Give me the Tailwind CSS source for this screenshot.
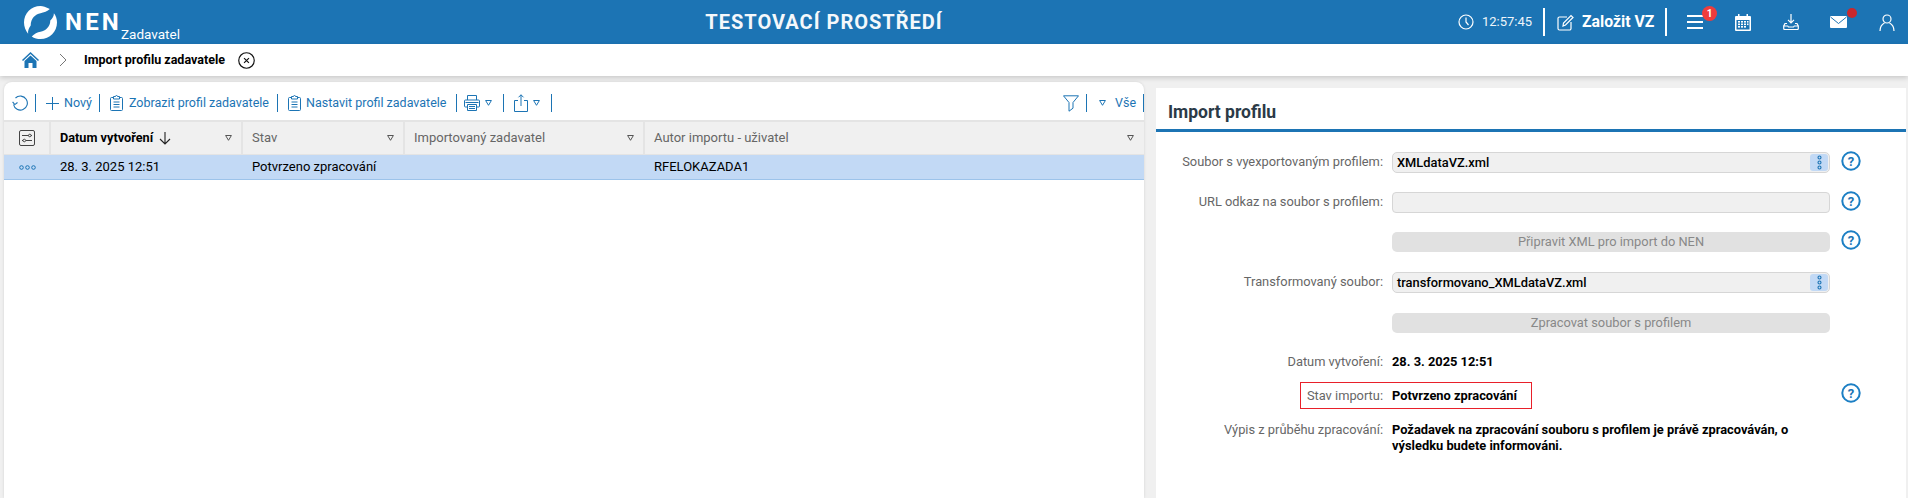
<!DOCTYPE html>
<html lang="cs">
<head>
<meta charset="utf-8">
<title>NEN</title>
<script src="https://cdn.jsdelivr.net/npm/@tailwindcss/browser@4"></script>
</head>
<body class="[font-family:Roboto,sans-serif] text-[13px] bg-[#f0f0f0] h-[498px] w-[1908px] overflow-hidden flex flex-col">
<header class="h-[44px] shrink-0 bg-[#1c74b4] text-white flex items-center relative">
  <div class="flex items-end pl-[24px] w-[400px] h-full">
    <svg class="w-[33px] h-[33px] self-center" viewBox="0 0 32 32" fill="#fff"><path d="M25 3C21 .8 18.500 0 16 0 7 0 0 7 0 16c0 4 1.500 8 4 11C3.500 24 5 21 6.500 19 6.500 12 11 8 16 7 19 6.500 23 5 25 3z"/><path d="M7.500 29.500C10 31.200 13 32 16 32 25 32 32 25 32 16 32 12.500 31 9.500 29 7 29 10 27.500 12 25.500 14 25.500 20 21 24 16 25 13 25.600 10 27 7.500 29.500z"/></svg>
    <div class="ml-[8px] w-[56px] self-center text-[24px] font-bold tracking-[3.2px] leading-none mb-[1px]">NEN</div>
    <div class="text-[13.5px] leading-[16px] mb-[2px]">Zadavatel</div>
  </div>
  <div class="absolute left-[700px] w-[248px] text-center text-[20px] font-bold tracking-[1px] text-[#f4f8fb]">TESTOVACÍ PROSTŘEDÍ</div>
  <div class="ml-auto flex items-center h-full pr-[13px]">
    <svg class="w-[16px] h-[16px]" viewBox="0 0 16 16" fill="none" stroke="#fff" stroke-width="1.200"><circle cx="8" cy="8" r="7"/><path d="M8 3.500V8l2.500 3"/></svg>
    <span class="ml-[8px] text-[13px] w-[49px] whitespace-nowrap text-[#eef5fa]">12:57:45</span>
    <div class="ml-[12px] w-[2px] h-[28px] bg-white"></div>
    <svg class="ml-[12px] w-[17px] h-[17px]" viewBox="0 0 17 17" fill="none" stroke="#fff" stroke-width="1.200"><path d="M10 3H2.500A1.500 1.500 0 0 0 1 4.500v10A1.500 1.500 0 0 0 2.500 16h10a1.500 1.500 0 0 0 1.500-1.500V8"/><path d="M6 12l.5-3L14 1.500l2 2L8.500 11z"/></svg>
    <span class="ml-[8px] text-[15.8px] font-bold w-[71px] whitespace-nowrap">Založit VZ</span>
    <div class="ml-[12px] w-[2px] h-[28px] bg-white"></div>
    <div class="relative ml-[20px] w-[16px] h-[14px] flex flex-col justify-between">
      <div class="h-[2px] bg-white"></div><div class="h-[2px] bg-white"></div><div class="h-[2px] bg-white"></div>
      <div class="absolute left-[15px] top-[-9px] w-[15px] h-[15px] rounded-full bg-[#ee3c3c] text-[10px] font-bold leading-[15px] text-center">1</div>
    </div>
    <svg class="ml-[32px] w-[16px] h-[17px]" viewBox="0 0 16 17" fill="#fff"><path d="M3 0h1.500v2h7V0H13v2h2a1 1 0 0 1 1 1v13a1 1 0 0 1-1 1H1a1 1 0 0 1-1-1V3a1 1 0 0 1 1-1h2z"/><rect x="1.500" y="6" width="13" height="9.500" fill="#1c74b4"/><g fill="#fff"><rect x="3" y="7" width="2" height="1.600"/><rect x="6" y="7" width="2" height="1.600"/><rect x="9" y="7" width="2" height="1.600"/><rect x="12" y="7" width="1.500" height="1.600"/><rect x="3" y="9.500" width="2" height="1.600"/><rect x="6" y="9.500" width="2" height="1.600"/><rect x="9" y="9.500" width="2" height="1.600"/><rect x="12" y="9.500" width="1.500" height="1.600"/><rect x="3" y="12" width="2" height="1.600"/><rect x="6" y="12" width="2" height="1.600"/><rect x="9" y="12" width="2" height="1.600"/></g></svg>
    <svg class="ml-[32px] w-[16px] h-[16px]" viewBox="0 0 16 16" fill="none" stroke="#fff" stroke-width="1.200"><path d="M8 0v8.500M5 5.800 8 8.800l3-3"/><path d="M4 9.500H2L.7 12v2.500a1 1 0 0 0 1 1h12.600a1 1 0 0 0 1-1V12L14 9.500h-2M.7 12h4l.8 1h5l.8-1h4"/></svg>
    <svg class="ml-[31px] w-[17px] h-[12px]" viewBox="0 0 17 12"><rect width="17" height="12" rx="1" fill="#fff"/><path d="M.5 1 8.500 7.500 16.500 1" fill="none" stroke="#1c74b4" stroke-width="1"/></svg>
    <div class="relative w-0 h-0"><div class="absolute left-[0px] top-[-14px] w-[10px] h-[10px] rounded-full bg-[#c9282d]"></div></div>
    <svg class="ml-[32px] w-[16px] h-[17px]" viewBox="0 0 16 17" fill="none" stroke="#fff" stroke-width="1.200"><circle cx="8" cy="5" r="4"/><path d="M1 17c0-4 2.500-7 4.500-8M15 17c0-4-2.500-7-4.500-8"/></svg>
  </div>
</header>

<nav class="h-[32px] shrink-0 bg-white flex items-center pl-[22px] shadow-[0_2px_5px_rgba(0,0,0,0.16)] relative">
  <svg class="w-[17px] h-[16px]" viewBox="0 0 17 16"><path d="M8.500 0 0 8l1 1 7.500-7L16 9l1-1z" fill="#1c74b4"/><path d="M2.500 9 8.500 3.500 14.500 9v7H10.500v-5h-4v5h-4z" fill="#1c74b4"/></svg>
  <svg class="ml-[20px] w-[8px] h-[14px]" viewBox="0 0 8 14" fill="none" stroke="#777" stroke-width="1"><path d="M1 1l6 6-6 6"/></svg>
  <span class="ml-[17px] font-bold text-[12.5px] w-[141px] whitespace-nowrap text-black">Import profilu zadavatele</span>
  <svg class="ml-[13px] w-[17px] h-[17px]" viewBox="0 0 16 16" fill="none" stroke="#111" stroke-width="1.100"><circle cx="8" cy="8" r="7.300"/><path d="M5.700 5.700l4.600 4.600M10.300 5.700l-4.600 4.600"/></svg>
</nav>

<main class="flex-1 flex pl-[4px] pr-[2px] pt-[6px] min-h-0">
  <section class="w-[1140px] bg-white rounded-t-[8px] shadow-[0_0_3px_rgba(0,0,0,0.12)] flex flex-col">
    <div class="h-[40px] flex items-center text-[12.5px] text-[#1c74b4] pl-[8px] pt-[4px] border-b-2 border-[#e4e4e4]">
      <svg class="w-[16px] h-[16px]" viewBox="0 0 16 16" fill="none" stroke="#1c74b4" stroke-width="1.100"><path d="M3.500 3A7 7 0 1 1 1.500 9.500"/><path d="M.6 6.800 2.800 9.600 5.500 7.500"/></svg>
      <div class="ml-[7px] w-px h-[18px] bg-[#1c74b4]"></div>
      <svg class="ml-[10px] w-[13px] h-[13px]" viewBox="0 0 13 13" stroke="#1c74b4" stroke-width="1"><path d="M6.500 0v13M0 6.500h13"/></svg>
      <span class="ml-[5px] w-[28px]">Nový</span>
      <div class="ml-[7px] w-px h-[18px] bg-[#1c74b4]"></div>
      <svg class="ml-[10px] w-[13px] h-[16px]" viewBox="0 0 13 16" fill="none" stroke="#1c74b4"><path d="M3.500 2.500H1.500a1 1 0 0 0-1 1v11a1 1 0 0 0 1 1h10a1 1 0 0 0 1-1v-11a1 1 0 0 0-1-1h-2M3.500 1.500h2a1 1 0 0 1 2 0h2v2.500h-6zM3.500 7h6M3.500 9.500h6M3.500 12h6"/></svg>
      <span class="ml-[6px] w-[141px] whitespace-nowrap">Zobrazit profil zadavatele</span>
      <div class="ml-[7px] w-px h-[18px] bg-[#1c74b4]"></div>
      <svg class="ml-[10px] w-[13px] h-[16px]" viewBox="0 0 13 16" fill="none" stroke="#1c74b4"><path d="M3.500 2.500H1.500a1 1 0 0 0-1 1v11a1 1 0 0 0 1 1h10a1 1 0 0 0 1-1v-11a1 1 0 0 0-1-1h-2M3.500 1.500h2a1 1 0 0 1 2 0h2v2.500h-6zM3.500 7h6M3.500 9.500h6M3.500 12h6"/></svg>
      <span class="ml-[5px] w-[143px] whitespace-nowrap">Nastavit profil zadavatele</span>
      <div class="ml-[7px] w-px h-[18px] bg-[#1c74b4]"></div>
      <svg class="ml-[7px] w-[16px] h-[16px]" viewBox="0 0 16 16" fill="none" stroke="#1c74b4"><path d="M3.500 5V.5h9V5M3.500 12H1.500a1 1 0 0 1-1-1V6a1 1 0 0 1 1-1h13a1 1 0 0 1 1 1v5a1 1 0 0 1-1 1h-2M3.500 9.500h9v6h-9zM5 11.500h6M5 13.500h6M1.500 7.500h13"/></svg>
      <svg class="ml-[5px] w-[7px] h-[6px]" viewBox="0 0 7 6" fill="none" stroke="#1c74b4"><path d="M.6.500h5.800L3.500 5.300z"/></svg>
      <div class="ml-[11px] w-px h-[18px] bg-[#1c74b4]"></div>
      <svg class="ml-[10px] w-[14px] h-[18px]" viewBox="0 0 14 18" fill="none" stroke="#1c74b4"><path d="M4 6.500H.5v11h13v-11H10M7 12V.8M4.500 3.300 7 .8l2.500 2.500"/></svg>
      <svg class="ml-[5px] w-[7px] h-[6px]" viewBox="0 0 7 6" fill="none" stroke="#1c74b4"><path d="M.6.500h5.800L3.500 5.300z"/></svg>
      <div class="ml-[11px] w-px h-[18px] bg-[#1c74b4]"></div>
      <svg class="ml-auto w-[16px] h-[17px]" viewBox="0 0 16 17" fill="none" stroke="#1c74b4"><path d="M.5.800h15L10 7.500v5.700l-4 3V7.500z"/></svg>
      <div class="ml-[7px] w-px h-[18px] bg-[#1c74b4]"></div>
      <svg class="ml-[12px] w-[7px] h-[6px]" viewBox="0 0 7 6" fill="none" stroke="#1c74b4"><path d="M.6.500h5.800L3.500 5.300z"/></svg>
      <span class="ml-[9px] w-[21px]">Vše</span>
      <div class="ml-[7px] w-px h-[18px] bg-[#1c74b4]"></div>
    </div>
    <div class="grid grid-cols-[47px_192px_162px_240px_1fr] h-[33px] bg-[#f0f0f0] text-[#666] border-b border-[#e4e4e4] items-stretch">
      <div class="border-r-2 border-[#e4e4e4] flex items-center justify-center">
        <svg class="w-[16px] h-[16px]" viewBox="0 0 16 16" fill="none" stroke="#444"><rect x=".5" y=".5" width="15" height="15" rx="1.500"/><path d="M3 5.500h6.500M12 5.500h1M3 10.500h1M7 10.500h6"/><circle cx="10.800" cy="5.500" r="1.300"/><circle cx="5.300" cy="10.500" r="1.300"/></svg>
      </div>
      <div class="border-r-2 border-[#e4e4e4] flex items-center pl-[9px] pr-[9px] text-black font-bold text-[12.7px]">
        <span>Datum vytvoření</span>
        <svg class="ml-[6px] w-[12px] h-[13px]" viewBox="0 0 12 13" fill="none" stroke="#222" stroke-width="1.100"><path d="M6 0v12M1 7l5 5 5-5"/></svg>
        <svg class="ml-auto w-[7px] h-[6px]" viewBox="0 0 7 6" fill="none" stroke="#555"><path d="M.6.500h5.800L3.500 5.300z"/></svg>
      </div>
      <div class="border-r-2 border-[#e4e4e4] flex items-center pl-[9px] pr-[9px]">
        <span>Stav</span>
        <svg class="ml-auto w-[7px] h-[6px]" viewBox="0 0 7 6" fill="none" stroke="#555"><path d="M.6.500h5.800L3.500 5.300z"/></svg>
      </div>
      <div class="border-r-2 border-[#e4e4e4] flex items-center pl-[9px] pr-[9px]">
        <span>Importovaný zadavatel</span>
        <svg class="ml-auto w-[7px] h-[6px]" viewBox="0 0 7 6" fill="none" stroke="#555"><path d="M.6.500h5.800L3.500 5.300z"/></svg>
      </div>
      <div class="flex items-center pl-[9px] pr-[10px]">
        <span>Autor importu - uživatel</span>
        <svg class="ml-auto w-[7px] h-[6px]" viewBox="0 0 7 6" fill="none" stroke="#555"><path d="M.6.500h5.800L3.500 5.300z"/></svg>
      </div>
    </div>
    <div class="grid grid-cols-[47px_192px_162px_240px_1fr] h-[25px] bg-[#c2d9f5] border-b border-[#9cc3ea] text-black items-center">
      <div class="flex justify-center">
        <svg class="w-[17px] h-[5px]" viewBox="0 0 17 5" fill="none" stroke="#1c74b4"><circle cx="2.500" cy="2.500" r="1.800"/><circle cx="8.500" cy="2.500" r="1.800"/><circle cx="14.500" cy="2.500" r="1.800"/></svg>
      </div>
      <div class="pl-[9px]">28. 3. 2025 12:51</div>
      <div class="pl-[9px]">Potvrzeno zpracování</div>
      <div></div>
      <div class="pl-[9px]">RFELOKAZADA1</div>
    </div>
  </section>

  <section class="ml-[12px] w-[750px] mt-[6px] bg-white">
    <h2 class="h-[44px] pl-[12px] pt-[8px] flex items-center border-b-[3px] border-[#1c74b4] text-[17.5px] font-bold text-[#2b3a47]">Import profilu</h2>
    <div class="pt-[20px] flex flex-col text-black text-[12.85px]">
      <div class="grid grid-cols-[228px_438px_1fr] gap-x-[8px] h-[20px] items-center">
        <div class="text-right text-[#666] pb-[2px] pr-[1px]">Soubor s vyexportovaným profilem:</div>
        <div class="h-[21px] rounded-[5px] bg-[#f0f0f0] border border-[#d6d6d6] flex items-center pl-[4px] pb-[1px] font-medium">XMLdataVZ.xml
          <div class="ml-auto mr-[1px] mt-[1px] w-[18px] h-[17px] rounded-[3px] bg-[#c2d9f5] flex items-center justify-center"><svg class="w-[5px] h-[15px]" viewBox="0 0 5 15" fill="none" stroke="#1c74b4" stroke-width="1.100"><circle cx="2.500" cy="2.500" r="1.500"/><circle cx="2.500" cy="7.500" r="1.500"/><circle cx="2.500" cy="12.500" r="1.500"/></svg></div>
        </div>
        <svg class="ml-[3px] -mt-[4px] w-[20px] h-[20px]" viewBox="0 0 20 20" fill="none"><circle cx="10" cy="10" r="8.700" stroke="#1c7fc4" stroke-width="2"/><text x="10" y="14.500" text-anchor="middle" font-size="13" font-weight="700" fill="#1c74b4" font-family="Roboto">?</text></svg>
      </div>
      <div class="mt-[20px] grid grid-cols-[228px_438px_1fr] gap-x-[8px] h-[20px] items-center">
        <div class="text-right text-[#666] pb-[2px] pr-[1px]">URL odkaz na soubor s profilem:</div>
        <div class="h-[21px] rounded-[4px] bg-[#f0f0f0] border border-[#d6d6d6]"></div>
        <svg class="ml-[3px] -mt-[4px] w-[20px] h-[20px]" viewBox="0 0 20 20" fill="none"><circle cx="10" cy="10" r="8.700" stroke="#1c7fc4" stroke-width="2"/><text x="10" y="14.500" text-anchor="middle" font-size="13" font-weight="700" fill="#1c74b4" font-family="Roboto">?</text></svg>
      </div>
      <div class="mt-[20px] grid grid-cols-[228px_438px_1fr] gap-x-[8px] h-[20px] items-center">
        <div></div>
        <div class="h-[20px] rounded-[5px] bg-[#e1e1e1] text-[#888] text-center leading-[20px]">Připravit XML pro import do NEN</div>
        <svg class="ml-[3px] -mt-[4px] w-[20px] h-[20px]" viewBox="0 0 20 20" fill="none"><circle cx="10" cy="10" r="8.700" stroke="#1c7fc4" stroke-width="2"/><text x="10" y="14.500" text-anchor="middle" font-size="13" font-weight="700" fill="#1c74b4" font-family="Roboto">?</text></svg>
      </div>
      <div class="mt-[20px] grid grid-cols-[228px_438px_1fr] gap-x-[8px] h-[20px] items-center">
        <div class="text-right text-[#666] pb-[2px] pr-[1px]">Transformovaný soubor:</div>
        <div class="h-[21px] rounded-[5px] bg-[#f0f0f0] border border-[#d6d6d6] flex items-center pl-[4px] pb-[1px] font-medium">transformovano_XMLdataVZ.xml
          <div class="ml-auto mr-[1px] mt-[1px] w-[18px] h-[17px] rounded-[3px] bg-[#c2d9f5] flex items-center justify-center"><svg class="w-[5px] h-[15px]" viewBox="0 0 5 15" fill="none" stroke="#1c74b4" stroke-width="1.100"><circle cx="2.500" cy="2.500" r="1.500"/><circle cx="2.500" cy="7.500" r="1.500"/><circle cx="2.500" cy="12.500" r="1.500"/></svg></div>
        </div>
      </div>
      <div class="mt-[21px] grid grid-cols-[228px_438px_1fr] gap-x-[8px] h-[20px] items-center">
        <div></div>
        <div class="h-[20px] rounded-[5px] bg-[#e1e1e1] text-[#888] text-center leading-[20px]">Zpracovat soubor s profilem</div>
      </div>
      <div class="mt-[19px] grid grid-cols-[228px_438px_1fr] gap-x-[8px] h-[20px] items-center">
        <div class="text-right text-[#666] pr-[1px]">Datum vytvoření:</div>
        <div class="font-bold">28. 3. 2025 12:51</div>
      </div>
      <div class="mt-[14px] grid grid-cols-[228px_438px_1fr] gap-x-[8px] h-[20px] items-center relative">
        <div class="text-right text-[#666] pr-[1px]">Stav importu:</div>
        <div class="font-bold">Potvrzeno zpracování</div>
        <svg class="ml-[3px] -mt-[6px] w-[20px] h-[20px]" viewBox="0 0 20 20" fill="none"><circle cx="10" cy="10" r="8.700" stroke="#1c7fc4" stroke-width="2"/><text x="10" y="14.500" text-anchor="middle" font-size="13" font-weight="700" fill="#1c74b4" font-family="Roboto">?</text></svg>
        <div class="absolute left-[144px] top-[-4px] w-[232px] h-[27px] border border-[#e8202a]"></div>
      </div>
      <div class="mt-[16px] grid grid-cols-[228px_438px_1fr] gap-x-[8px] items-start leading-[16px]">
        <div class="text-right text-[#666] pr-[1px]">Výpis z průběhu zpracování:</div>
        <div class="font-bold w-[420px]">Požadavek na zpracování souboru s profilem je právě zpracováván, o výsledku budete informováni.</div>
      </div>
    </div>
  </section>
</main>
</body>
</html>
